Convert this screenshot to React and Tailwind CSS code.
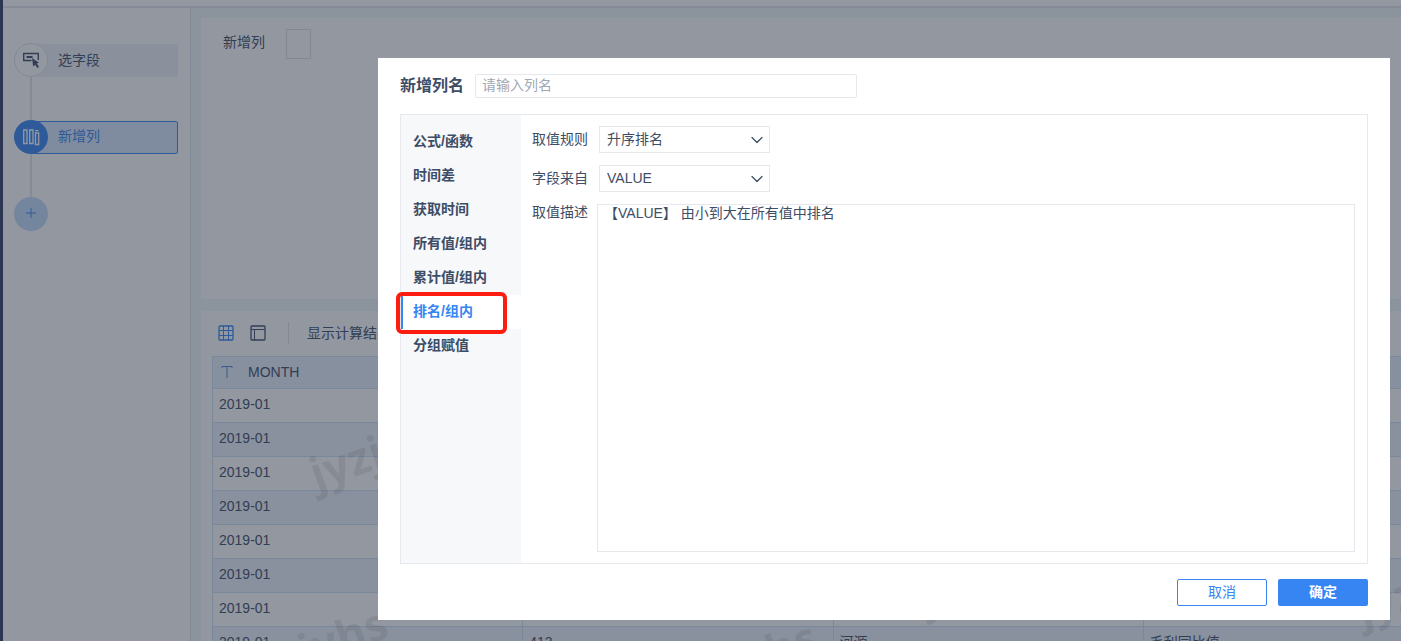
import clsx from 'clsx';
import { ChevronDown, Plus } from 'lucide-react';

const tabs = ['公式/函数', '时间差', '获取时间', '所有值/组内', '累计值/组内', '排名/组内', '分组赋值'];

const rows = [
  { month: '2019-01' },
  { month: '2019-01' },
  { month: '2019-01' },
  { month: '2019-01' },
  { month: '2019-01' },
  { month: '2019-01' },
  { month: '2019-01' },
  { month: '2019-01', value: '413', city: '河源', type: '毛利同比值' },
];

const FieldIcon = () => (
  <svg width="18" height="18" viewBox="0 0 18 18" fill="none">
    <path d="M9.500 9.500H1.700V2.500H16.300V9" stroke="#3d4d66" strokeWidth="1.400" />
    <path d="M4.500 6H10.500" stroke="#3d4d66" strokeWidth="2" />
    <path d="M10 7L17 11.800L14.800 12.600L17 16L15.300 17L13.200 13.800L11.200 15.500Z" fill="#3d4d66" />
  </svg>
);

const ColumnIcon = () => (
  <svg width="18" height="18" viewBox="0 0 18 18" fill="none" stroke="#fff" strokeWidth="1.300">
    <path d="M1.700 2H5V15.500H1.700ZM7.700 2H11V15.500H7.700ZM13.500 5H16.700V16.500H13.500ZM13 2.700H16.500" />
  </svg>
);

const GridIcon = () => (
  <svg width="16" height="16" viewBox="0 0 16 16" fill="none" stroke="#3685f2">
    <rect x="1" y="1" width="14" height="14" rx="1" strokeWidth="1.300" />
    <path d="M1 5.500H15M1 10.500H15M5.500 1V15M10.500 1V15" />
  </svg>
);

const LayoutIcon = () => (
  <svg width="16" height="16" viewBox="0 0 16 16" fill="none" stroke="#3d4d66">
    <rect x="1" y="1" width="14" height="14" rx="1" strokeWidth="1.300" />
    <path d="M1 4.500H15M4.500 4.500V15" />
  </svg>
);

const TextTypeIcon = () => (
  <svg width="12" height="14" viewBox="0 0 12 14" fill="none" stroke="#5b7fd0">
    <path d="M1 3V1.500H11V3M6 1.500V13" />
  </svg>
);

function Sidebar() {
  return (
    <aside className="w-[188px] shrink-0 border-r border-[#dfe3ea] bg-white px-3 pt-[35px]">
      <ul className="-ml-px">
        <li>
          <a href="#fields" className="flex h-[34px] items-center">
            <span className="z-10 -mr-[17px] flex size-[34px] shrink-0 items-center justify-center rounded-full border border-[#dfe3ea] bg-white">
              <FieldIcon />
            </span>
            <span className="flex h-[33px] flex-1 items-center rounded-xs bg-[#f0f3f7] pl-[27px]">选字段</span>
          </a>
          <div className="ml-4 h-[43px] w-0.5 bg-[#e3e6ec]" />
        </li>
        <li>
          <a href="#column" className="flex h-[34px] items-center text-[#3685f2]">
            <span className="z-10 -mr-[17px] flex size-[34px] shrink-0 items-center justify-center rounded-full bg-[#3685f2]">
              <ColumnIcon />
            </span>
            <span className="flex h-[33px] flex-1 items-center rounded-xs border border-[#3685f2] bg-[#d9e6fb] pb-0.5 pl-[26px]">新增列</span>
          </a>
          <div className="ml-4 h-[43px] w-0.5 bg-[#e3e6ec]" />
        </li>
        <li>
          <button aria-label="+" className="flex size-[34px] items-center justify-center rounded-full bg-[#c3dcfb] pb-0.5 text-[#3685f2]">
            <Plus size={16} strokeWidth={1.5} />
          </button>
        </li>
      </ul>
    </aside>
  );
}

function DataTable() {
  return (
    <table className="w-[1242px] table-fixed border-collapse">
      <thead>
        <tr className="h-8 bg-[#e9f1fd]">
          <th className="border border-[#cfe0f5] px-2 pb-0.5 text-left font-normal">
            <span className="flex items-center gap-[15px]">
              <TextTypeIcon />
              MONTH
            </span>
          </th>
          <th className="border border-[#cfe0f5]" />
          <th className="border border-[#cfe0f5]" />
          <th className="border border-[#cfe0f5]" />
        </tr>
      </thead>
      <tbody>
        {rows.map((row, i) => (
          <tr key={i} className="h-[34px] odd:bg-white even:bg-[#eff3fa]">
            <td className="border border-[#cfe0f5] px-1.5 pb-1">{row.month}</td>
            <td className="border border-[#cfe0f5] px-1.5 pb-1">{row.value}</td>
            <td className="border border-[#cfe0f5] px-1.5 pb-1">{row.city}</td>
            <td className="border border-[#cfe0f5] px-1.5 pb-1">{row.type}</td>
          </tr>
        ))}
      </tbody>
    </table>
  );
}

function Workspace() {
  return (
    <main className="flex min-w-0 flex-1 flex-col gap-3 bg-[#f0f6f8] pt-2.5 pl-2.5">
      <section className="h-[281px] shrink-0 bg-white px-[22px] pt-[11px]">
        <div className="flex items-center gap-[21px]">
          <span className="pb-1">新增列</span>
          <span className="h-[30px] w-[25px] border border-[#dfe3ea]" />
        </div>
      </section>
      <section className="flex-1 overflow-hidden bg-white pl-[11px]">
        <div className="flex h-[45px] items-center pb-0.5 pl-1.5">
          <button aria-label="表格"><GridIcon /></button>
          <button aria-label="布局" className="ml-4"><LayoutIcon /></button>
          <div className="mx-[18px] ml-[22px] h-[22px] w-px bg-[#dfe3ea]" />
          显示计算结果
        </div>
        <DataTable />
      </section>
    </main>
  );
}

// tiled watermark over the data grid
const marks = [
  'top-[453px] left-[300px]',
  'top-[651px] left-[231px]',
  'top-[665px] left-[661px]',
  'top-[577px] left-[910px]',
  'top-[589px] left-[1346px]',
];

function SelectBox({ label, id, value }) {
  return (
    <div className="flex items-center">
      <label htmlFor={id} className="w-[67px] pb-0.5">{label}</label>
      <div className="relative">
        <select id={id} defaultValue={value} className="h-[27px] w-[171px] appearance-none border border-[#e6e8ed] bg-white px-[7px] pb-0.5 leading-5">
          <option>{value}</option>
        </select>
        <ChevronDown size={20} strokeWidth={1.5} className="pointer-events-none absolute top-1 right-[3px]" />
      </div>
    </div>
  );
}

function ColumnDialog() {
  return (
    <div role="dialog" aria-labelledby="dialog-name" className="mr-[11px] ml-[378px] bg-white px-[22px] pt-4 pb-3.5">
      <div className="flex h-6 items-center gap-[11px]">
        <label id="dialog-name" htmlFor="column-name" className="text-base font-bold">新增列名</label>
        <input id="column-name" placeholder="请输入列名" className="h-6 w-[382px] rounded-xs border border-[#e6e8ed] px-1.5 pb-0.5 placeholder:text-[#a0a8b5]" />
      </div>

      <div className="mt-4 flex h-[450px] border border-[#e6e8ed]">
        <nav className="w-[120px] shrink-0 bg-[#f6f8fa] pt-2.5">
          {tabs.map((tab) => {
            const active = tab === '排名/组内';
            return (
              <button
                key={tab}
                className={clsx(
                  'relative flex h-[34px] w-full items-center pb-0.5 pl-3 font-bold',
                  active && 'bg-white text-[#3685f2]'
                )}
              >
                {tab}
                {active && <span className="absolute inset-y-0 left-0 w-0.5 bg-[#3685f2]" />}
                {active && <span className="absolute -top-[3px] -left-[5px] h-[42px] w-[111px] rounded-md border-4 border-[#fd1d10]" />}
              </button>
            );
          })}
        </nav>

        <form className="flex min-w-0 flex-1 flex-col gap-3 pt-[11px] pr-3 pb-[11px] pl-[11px]">
          <SelectBox id="rule" label="取值规则" value="升序排名" />
          <SelectBox id="field" label="字段来自" value="VALUE" />
          <div className="flex flex-1">
            <label htmlFor="desc" className="w-[65px] shrink-0 leading-4">取值描述</label>
            <textarea
              id="desc"
              readOnly
              defaultValue="【VALUE】 由小到大在所有值中排名"
              className="min-w-0 flex-1 resize-none border border-[#e6e8ed] px-1.5 leading-4"
            />
          </div>
        </form>
      </div>

      <div className="mt-[15px] flex justify-end gap-[11px]">
        <button className="h-[27px] w-[90px] rounded-xs border border-[#3685f2] bg-white pb-0.5 text-[#3685f2]">取消</button>
        <button className="h-[27px] w-[90px] rounded-xs bg-[#3685f2] pb-0.5 font-bold text-white">确定</button>
      </div>
    </div>
  );
}

export default function App() {
  return (
    <div className="relative flex h-screen flex-col overflow-hidden border-l-3 border-[#313c5e] bg-white font-['Liberation_Sans','Noto_Sans_CJK_SC',sans-serif] text-sm text-[#3d4d66]">
      <header className="h-2 shrink-0 border-b-2 border-[#e3e6ec]" />
      <div className="flex min-h-0 flex-1">
        <Sidebar />
        <Workspace />
      </div>

      {marks.map((pos) => (
        <span key={pos} aria-hidden="true" className={clsx("pointer-events-none absolute origin-top-left -rotate-20 font-['Open_Sans',sans-serif] text-[45px] leading-none font-bold text-black/10", pos)}>
          jyzjyhs
        </span>
      ))}

      <div className="fixed inset-0 z-20 bg-[#253042]/50 pt-[58px]">
        <ColumnDialog />
      </div>
    </div>
  );
}
